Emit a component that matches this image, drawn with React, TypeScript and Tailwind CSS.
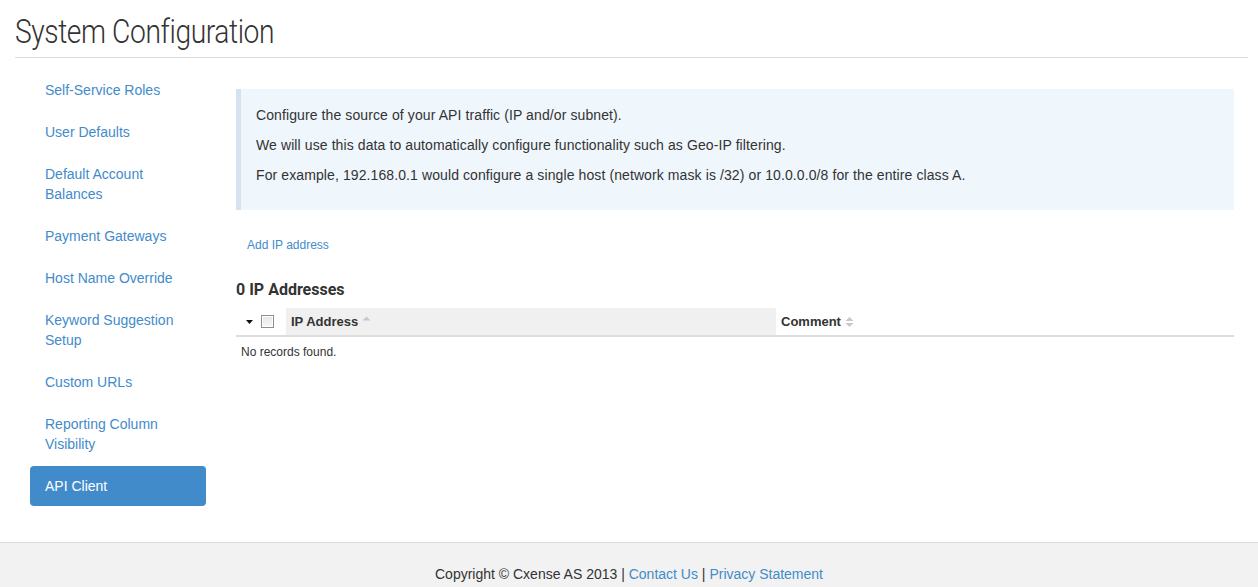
import React from "react";

const navItems: string[][] = [
  ["Self-Service Roles"],
  ["User Defaults"],
  ["Default Account", "Balances"],
  ["Payment Gateways"],
  ["Host Name Override"],
  ["Keyword Suggestion", "Setup"],
  ["Custom URLs"],
  ["Reporting Column", "Visibility"],
];

function SortUp() {
  return (
    <svg width="9" height="5" viewBox="0 0 9 5" className="inline-block">
      <path d="M0.5 4.5 L4.5 0.5 L8.5 4.5 Z" fill="#c8c8c8" />
    </svg>
  );
}

function SortBoth() {
  return (
    <svg width="9" height="10" viewBox="0 0 9 10" className="inline-block">
      <path d="M0.5 4 L4.5 0 L8.5 4 Z" fill="#c8c8c8" />
      <path d="M0.5 6 L4.5 10 L8.5 6 Z" fill="#c8c8c8" />
    </svg>
  );
}

export default function App() {
  return (
    <div
      className="min-h-screen bg-white text-[#333] flex flex-col"
      style={{ fontFamily: '"Liberation Sans", Arial, sans-serif' }}
    >
      <div className="pl-[15px] pr-[10px]">
        <h1
          className="pt-[14px] pb-[8px] text-[34px] leading-[35px] font-light text-[#333] tracking-[-0.5px] origin-left scale-x-[0.83] whitespace-nowrap"
          style={{ fontFamily: "Roboto, sans-serif" }}
        >
          System Configuration
        </h1>
        <div className="h-px bg-[#dddddd]" />
      </div>

      <div className="flex pl-[15px] pr-[9px] pt-[12px]">
        <nav className="w-[206px] shrink-0 px-[15px] flex flex-col gap-[2px]">
          {navItems.map((lines) => (
            <a
              key={lines[0]}
              href="#"
              className="block px-[15px] py-[10px] text-[14px] leading-[20px] text-[#428bca] rounded-[4px]"
            >
              {lines.map((l) => (
                <span key={l} className="block">
                  {l}
                </span>
              ))}
            </a>
          ))}
          <a
            href="#"
            className="block px-[15px] py-[10px] text-[14px] leading-[20px] text-white bg-[#428bca] rounded-[4px]"
          >
            API Client
          </a>
        </nav>

        <main className="flex-1 px-[15px]">
          <div className="mt-[19px] bg-[#eff6fc] border-l-[5px] border-[#d4e3ef] pl-[15px] pr-[15px] pt-[16px] pb-[15px] text-[14px] leading-[20px] tracking-[0.1px] text-[#333]">
            <p className="mb-[10px]">Configure the source of your API traffic (IP and/or subnet).</p>
            <p className="mb-[10px]">
              We will use this data to automatically configure functionality such as Geo-IP filtering.
            </p>
            <p className="mb-[10px]">
              For example, 192.168.0.1 would configure a single host (network mask is /32) or 10.0.0.0/8 for the entire class A.
            </p>
          </div>

          <div className="pt-[27px] pl-[11px] text-[12px] leading-[17px]">
            <a href="#" className="text-[#428bca]">
              Add IP address
            </a>
          </div>

          <h2
            className="mt-[25px] text-[16px] leading-[22px] font-bold text-[#333]"
            style={{ fontFamily: "Roboto, sans-serif" }}
          >
            0 IP Addresses
          </h2>

          <table className="mt-[7px] w-full border-collapse">
            <thead>
              <tr className="h-[28px] border-b-2 border-[#dddddd]">
                <th className="w-[50px] pl-[10px] text-left align-middle">
                  <div className="flex items-center gap-[8px]">
                    <svg width="7" height="4" viewBox="0 0 7 4">
                      <path d="M0 0 L7 0 L3.5 4 Z" fill="#111" />
                    </svg>
                    <span className="w-[13px] h-[13px] border border-[#8f8f8f] bg-gradient-to-b from-[#e6e6e6] to-[#f8f8f8] shadow-[inset_0_0_0_1px_#fff]" />
                  </div>
                </th>
                <th className="w-[490px] bg-[#f0f0f0] pl-[5px] text-left align-middle text-[13px] font-bold text-[#333]">
                  <span className="inline-flex items-center gap-[4px]">
                    IP Address
                    <span className="-mt-[6px] flex">
                      <SortUp />
                    </span>
                  </span>
                </th>
                <th className="pl-[5px] text-left align-middle text-[13px] font-bold text-[#333]">
                  <span className="inline-flex items-center gap-[4px]">
                    Comment
                    <SortBoth />
                  </span>
                </th>
              </tr>
            </thead>
            <tbody>
              <tr>
                <td colSpan={3} className="pl-[5px] pt-[7px] text-[12px] leading-[17px] text-[#333]">
                  No records found.
                </td>
              </tr>
            </tbody>
          </table>
        </main>
      </div>

      <footer className="mt-[36px] flex-1 border-t border-[#dddddd] bg-[#f2f2f2] pt-[21px] pb-[20px] text-center text-[14px] leading-[20px] text-[#333]">
        Copyright © Cxense AS 2013 | <a href="#" className="text-[#428bca]">Contact Us</a> |{" "}
        <a href="#" className="text-[#428bca]">Privacy Statement</a>
      </footer>
    </div>
  );
}
